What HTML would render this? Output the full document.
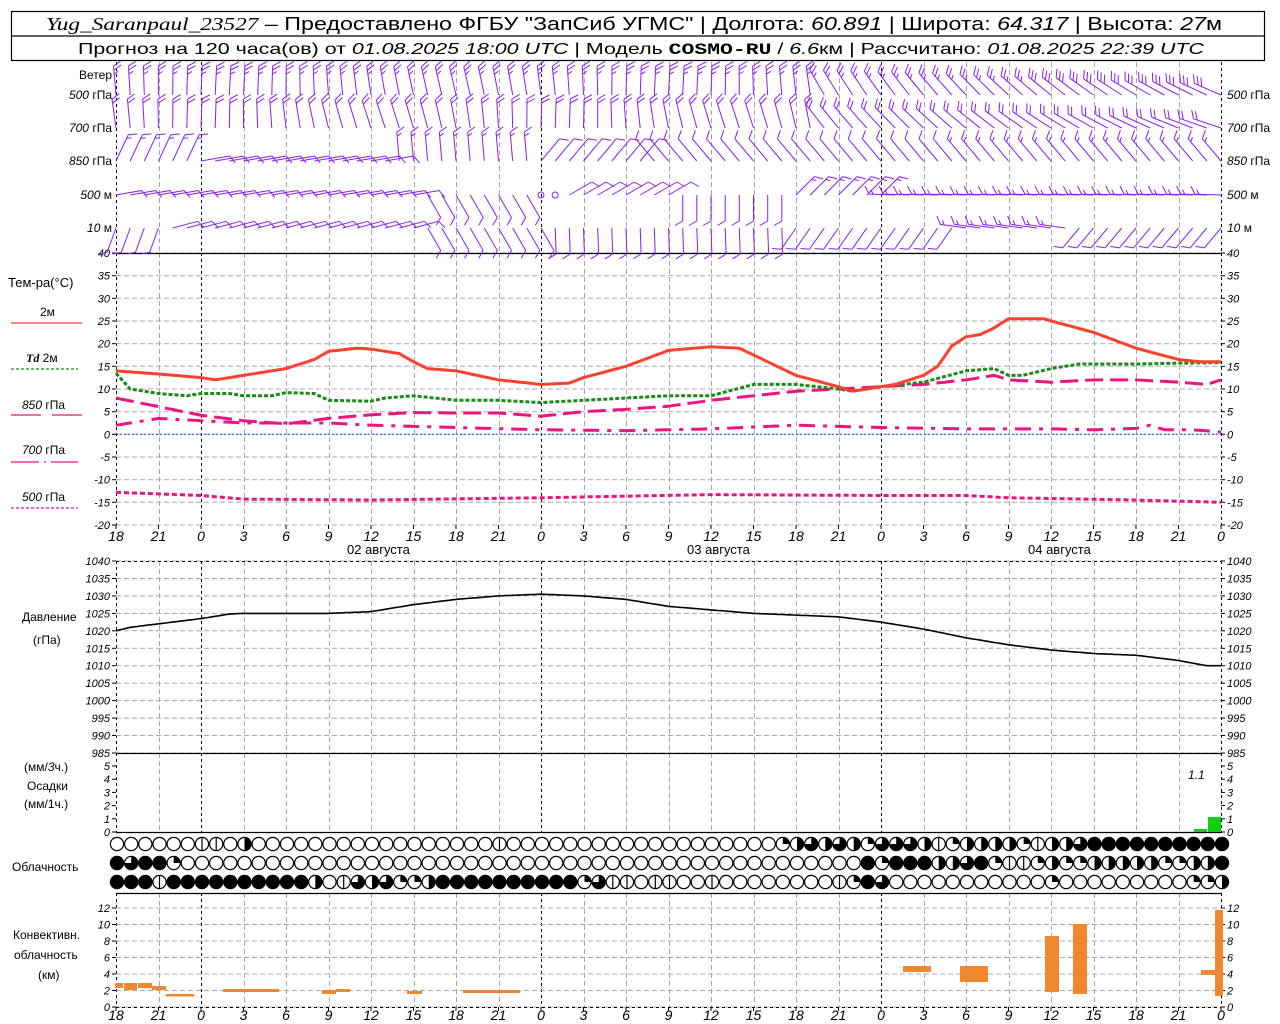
<!DOCTYPE html>
<html><head><meta charset="utf-8">
<style>
html,body{margin:0;padding:0;background:#fff;width:1280px;height:1024px;overflow:hidden}
svg{display:block}
text{font-family:"Liberation Sans",sans-serif;fill:#000}
.it{font-style:italic}
.ax{font-size:11px;font-style:italic}
.lb{font-size:12px}
</style></head><body>
<svg id="s" width="1280" height="1024" viewBox="0 0 1280 1024" xmlns="http://www.w3.org/2000/svg">
<rect x="11.5" y="11.5" width="1253" height="49" fill="#fff" stroke="#000" stroke-width="1.2"/>
<line x1="11.5" y1="36" x2="1264.5" y2="36" stroke="#000" stroke-width="1.2"/>
<text x="46" y="30" font-size="18" textLength="1176" lengthAdjust="spacingAndGlyphs"><tspan class="it" font-family="Liberation Serif">Yug_Saranpaul_23527</tspan> – Предоставлено ФГБУ "ЗапСиб УГМС" | Долгота: <tspan class="it">60.891</tspan> | Широта: <tspan class="it">64.317</tspan> | Высота: <tspan class="it">27</tspan>м</text>
<text x="78" y="54" font-size="16" textLength="1126" lengthAdjust="spacingAndGlyphs">Прогноз на 120 часа(ов) от <tspan class="it">01.08.2025 18:00 UTC</tspan>  | Модель <tspan font-weight="bold" font-family="Liberation Mono">COSMO-RU</tspan> / <tspan class="it">6.6</tspan>км | Рассчитано: <tspan class="it">01.08.2025 22:39 UTC</tspan></text>

<g class="lb" text-anchor="end">
<text x="112" y="79">Ветер</text>
<text x="112" y="99"><tspan class="it">500</tspan> гПа</text>
<text x="112" y="132"><tspan class="it">700</tspan> гПа</text>
<text x="112" y="165"><tspan class="it">850</tspan> гПа</text>
<text x="112" y="199"><tspan class="it">500</tspan> м</text>
<text x="112" y="232"><tspan class="it">10</tspan>   м</text>
</g>
<g class="lb">
<text x="1227" y="99"><tspan class="it">500</tspan> гПа</text>
<text x="1227" y="132"><tspan class="it">700</tspan> гПа</text>
<text x="1227" y="165"><tspan class="it">850</tspan> гПа</text>
<text x="1227" y="199"><tspan class="it">500</tspan> м</text>
<text x="1227" y="232"><tspan class="it">10</tspan>   м</text>
</g>
<g class="lb">
<text x="8" y="287" font-size="13">Тем-ра(°C)</text>
<text x="40" y="316">2м</text>
<text x="26" y="362"><tspan class="it" font-weight="bold" font-family="Liberation Serif">Td</tspan>  2м</text>
<text x="22" y="409"><tspan class="it">850</tspan> гПа</text>
<text x="22" y="454"><tspan class="it">700</tspan> гПа</text>
<text x="22" y="501"><tspan class="it">500</tspan> гПа</text>
<text x="22" y="621">Давление</text>
<text x="33" y="644">(гПа)</text>
<text x="24" y="771">(мм/<tspan class="it">3</tspan>ч.)</text>
<text x="27" y="790">Осадки</text>
<text x="24" y="808">(мм/1ч.)</text>
<text x="12" y="871">Облачность</text>
<text x="13" y="939">Конвективн.</text>
<text x="14" y="959">облачность</text>
<text x="38" y="979">(км)</text>
<text x="1188" y="779" class="it">1.1</text>
<text x="347" y="554" font-size="13">02  августа</text>
<text x="687" y="554" font-size="13">03  августа</text>
<text x="1028" y="554" font-size="13">04  августа</text>
</g>
<line x1="11" y1="323" x2="82" y2="323" stroke="#ff4030" stroke-width="1.2"/>
<line x1="11" y1="369" x2="78" y2="369" stroke="#1a8a1a" stroke-width="1.2" stroke-dasharray="3,2"/>
<line x1="11" y1="415" x2="41" y2="415" stroke="#ee1480" stroke-width="1.2"/>
<line x1="52" y1="415" x2="82" y2="415" stroke="#ee1480" stroke-width="1.2"/>
<line x1="11" y1="462" x2="78" y2="462" stroke="#ee1480" stroke-width="1.2" stroke-dasharray="28,5,2,5"/>
<line x1="11" y1="508" x2="78" y2="508" stroke="#ee1480" stroke-width="1.2" stroke-dasharray="3,2"/>
<g id="g"></g>
</svg>
<script>
var g=document.getElementById('g');var o='';
function X(h){return 116+h*1105/78;}
function L(x1,y1,x2,y2,st){o+='<line x1="'+x1.toFixed(1)+'" y1="'+y1.toFixed(1)+'" x2="'+x2.toFixed(1)+'" y2="'+y2.toFixed(1)+'" '+st+'/>';}
var GR='stroke="#a8a8a8" stroke-width="1" stroke-dasharray="5,3"';
var BK='stroke="#000" stroke-width="1" stroke-dasharray="3,3"';
var panels=[[62,253],[253,525],[561,753],[753,832],[893,1007]];
for(var h=0;h<=78;h+=3){var x=Math.round(X(h))+0.5;var mid=(h%24==6)||h==0||h==78;
 panels.forEach(function(p){L(x,p[0],x,p[1],mid?BK:GR);});}
function hg(y0,y1,n){for(var i=0;i<=n;i++){var y=y0+(y1-y0)*i/n;L(116,y,1221,y,GR);}}
hg(253,525,12);hg(561,753,11);hg(908,1007,6);
L(116,253.5,1222,253.5,'stroke="#000" stroke-width="1.2"');
L(116,561.5,1221,561.5,BK);
L(116,753.5,1222,753.5,'stroke="#000" stroke-width="1.2"');
L(116,832.5,1222,832.5,'stroke="#000" stroke-width="1.2"');
L(116,893.5,1222,893.5,'stroke="#000" stroke-width="1.2"');
L(116,1007.5,1221,1007.5,BK);
L(116,434.3,1221,434.3,'stroke="#2040ff" stroke-width="1" stroke-dasharray="2,2"');
function yl(vals,ys){vals.forEach(function(v,i){var y=ys[i];
 o+='<text class="ax" x="110" y="'+(y+4)+'" text-anchor="end">'+v+'</text>';
 o+='<text class="ax" x="1227" y="'+(y+4)+'">'+v+'</text>';
 L(112,y,116,y,'stroke="#000"');L(1221,y,1225,y,'stroke="#000"');});}
var tv=["40","35","30","25","20","15","10","5","0","-5","-10","-15","-20"];
yl(tv,tv.map(function(v,i){return 253+i*272/12;}));
var pv=["1040","1035","1030","1025","1020","1015","1010","1005","1000","995","990","985"];
yl(pv,pv.map(function(v,i){return 561+i*192/11;}));
var rv=["5","4","3","2","1","0"];
yl(rv,rv.map(function(v,i){return 766+i*13.2;}));
var cv=["12","10","8","6","4","2","0"];
yl(cv,cv.map(function(v,i){return 908+i*16.5;}));
var tl=["18","21","0","3","6","9","12","15","18","21","0","3","6","9","12","15","18","21","0","3","6","9","12","15","18","21","0"];
tl.forEach(function(t,i){var x=X(i*3);
 o+='<text x="'+x+'" y="541" text-anchor="middle" font-size="14" class="it">'+t+'</text>';
 o+='<text x="'+x+'" y="1020" text-anchor="middle" font-size="14" class="it">'+t+'</text>';
 L(x,525,x,529,'stroke="#000"');L(x,1007,x,1011,'stroke="#000"');});
function interp(p,h){for(var i=0;i<p.length-1;i++){if(h<=p[i+1][0]){var a=p[i],b=p[i+1];return a[1]+(b[1]-a[1])*(h-a[0])/(b[0]-a[0]);}}return p[p.length-1][1];}
function curve(p,yf,st){var s='';for(var h=0;h<=78.001;h+=0.25){s+=X(h).toFixed(1)+','+yf(interp(p,h)).toFixed(1)+' ';}
 o+='<polyline fill="none" points="'+s+'" '+st+'/>';}
function TY(t){return 434.3-t*4.533;}
var T2=[[0,14],[3,13.3],[6,12.5],[7,12],[9,13],[12,14.5],[14,16.5],[15,18.3],[17,19],[18,18.8],[20,17.8],[21,16],[22,14.5],[24,14],[27,12],[30,11],[32,11.3],[33,12.5],[36,15],[39,18.5],[42,19.3],[44,19],[45,17.5],[48,13],[51,10.5],[52,9.5],[54,10.5],[55,11],[57,13],[58,15],[59,19.5],[60,21.5],[61,22],[62,23.5],[63,25.5],[65.5,25.5],[66,25],[69,22.5],[72,19],[75,16.5],[76.5,16],[78,16]];
var TD=[[0,13.5],[1,10],[3,9],[5,8.5],[6,9],[8,9],[9,8.5],[11,8.5],[12,9.2],[14,9],[15,7.5],[18,7.3],[19,8],[21,8.5],[24,7.5],[27,7.5],[30,7],[33,7.5],[36,8],[39,8.5],[42,8.5],[45,11],[48,11],[51,10],[52,9.5],[54,10.5],[57,11.5],[60,14],[62,14.5],[63,13],[64,13],[66,14.5],[68,15.5],[72,15.5],[75,15.7],[78,15.8]];
var P85=[[0,8],[6,4.2],[9,3],[12,2.3],[15,3.5],[18,4.3],[21,4.8],[24,4.7],[27,4.7],[30,4],[33,5],[36,5.5],[39,6.2],[42,7.5],[45,8.5],[48,9.5],[51,10],[54,10.5],[57,11],[60,12],[62,13],[63,12],[66,11.5],[69,12],[72,12],[75,11.5],[77,11],[78,12]];
var P70=[[0,2],[3,3.5],[6,3],[9,2.5],[15,2.5],[18,2],[24,1.5],[30,1],[36,0.8],[42,1.2],[48,2],[54,1.5],[60,1.2],[66,1.2],[69,1],[72,1.3],[73,2],[74,1],[76,1],[78,0.5]];
var P50=[[0,-12.8],[6,-13.5],[9,-14.3],[18,-14.5],[30,-14],[42,-13.3],[54,-13.5],[60,-13.5],[63,-14],[72,-14.5],[78,-15]];
curve(P50,TY,'stroke="#ee1480" stroke-width="3" stroke-dasharray="5,3"');
curve(P70,TY,'stroke="#ee1480" stroke-width="3" stroke-dasharray="16,8,4,8"');
curve(P85,TY,'stroke="#ee1480" stroke-width="3" stroke-dasharray="18,7"');
curve(TD,TY,'stroke="#1a8a1a" stroke-width="3" stroke-dasharray="4,2"');
curve(T2,TY,'stroke="#ff4030" stroke-width="3"');
var PR=[[0,1020],[1,1021],[3,1022],[6,1023.5],[8,1024.8],[9,1025],[12,1025],[15,1025],[18,1025.5],[21,1027.5],[24,1029],[27,1030],[30,1030.5],[33,1030],[36,1029],[39,1027],[42,1026],[45,1025],[48,1024.5],[51,1024],[54,1022.5],[57,1020.5],[60,1018],[63,1016],[66,1014.5],[69,1013.5],[72,1013],[75,1011.5],[77,1010],[78,1010]];
curve(PR,function(p){return 561+(1040-p)*192/55;},'stroke="#000" stroke-width="1.6"');
o+='<rect x="1194" y="829" width="13" height="3" fill="#10d010"/><rect x="1208" y="817" width="13" height="15" fill="#10d010"/>';
var OR='#f08830';
[[115,983,8,5],[124,983,13,7],[138,983,14,5],[152,986,14,4],[166,994,28,2.5],[223,989,56,3],[322,990,14,4],[336,989,14,3],[407,991,15,3],[463,990,57,3],[903,966,28,6],[960,966,28,16],[1045,936,14,56],[1073,924,14,70],[1201,970,16,5],[1215,910,8,86]].forEach(function(b){o+='<rect x="'+b[0]+'" y="'+b[1]+'" width="'+b[2]+'" height="'+b[3]+'" fill="'+OR+'"/>';});
var rows=[
"OOOOOOVVOH"+"O".repeat(17)+"V"+"O".repeat(18)+"OQHTHTHQTTTHVQHHHHQVHHTFFFFFFFFFF",
"FTFFQ"+"O".repeat(41)+"OOOOOOO"+"FQFFFHHTFQVVQHQQHHHHHQQHHF",
"FFFVFFFFFFFFFF"+"HOVTHTQQH"+"FFFFFFFFFF"+"QTVVOVVOOV"+"OOOOOOOO"+"VQFT"+"O".repeat(11)+"Q"+"O".repeat(9)+"QQH"];
var ry=[844,863,882];var r=6.6;
rows.forEach(function(s,ri){var cy=ry[ri];for(var i=0;i<79;i++){var c=s[i]||'O';var cx=117+i*14.1667;
 o+='<circle cx="'+cx.toFixed(1)+'" cy="'+cy+'" r="'+r+'" fill="'+(c=='F'?'#000':'#fff')+'" stroke="#000" stroke-width="1.2"/>';
 var a=cx.toFixed(1),t=(cy-r).toFixed(1),bt=(cy+r).toFixed(1);
 if(c=='H')o+='<path d="M'+a+' '+t+' A'+r+' '+r+' 0 0 1 '+a+' '+bt+' Z"/>';
 if(c=='Q')o+='<path d="M'+a+' '+cy+' L'+a+' '+t+' A'+r+' '+r+' 0 0 1 '+(cx+r).toFixed(1)+' '+cy+' Z"/>';
 if(c=='T')o+='<path d="M'+a+' '+cy+' L'+a+' '+t+' A'+r+' '+r+' 0 1 1 '+(cx-r).toFixed(1)+' '+cy+' Z"/>';
 if(c=='V')L(cx,cy-r,cx,cy+r,'stroke="#000" stroke-width="1.2"');
}});
function wind(ri,i){
 var d,n;
 if(ri==0){if(i<50){d=355+8*Math.sin(i/5);n=5;}else{d=330-(i-50)*1.3;n=i<66?5:6;}}
 else if(ri==1){if(i<50){d=352+10*Math.sin(i/4);n=4;}else{d=322-(i-50)*1.2;n=4;}}
 else if(ri==2){if(i<6){d=25;n=3;}else if(i<20){d=80;n=2;}else if(i<30){d=355;n=3;}else if(i<38){d=40;n=2;}else{d=320;n=(i<60?2:3);}}
 else if(ri==3){if(i<22){d=80;n=2;}else if(i<30){d=150;n=2;}else if(i<32){d=-1;n=0;}else if(i<40){d=60;n=2;}else if(i<48){d=180;n=2;}else if(i<55){d=45;n=3;}else{d=272;n=3;}}
 else{if(i<4){d=200;n=2;}else if(i<22){d=75;n=2;}else if(i<31){d=150;n=2;}else if(i<48){d=178;n=2;}else if(i<60){d=215;n=2;}else if(i<68){d=278;n=3;}else{d=220;n=2;}}
 return [d,n];}
var wy=[95,128,161,195,228];var WS='stroke="#8a1ef0" stroke-width="1"';
for(var ri=0;ri<5;ri++){for(var i=0;i<=78;i++){var w=wind(ri,i);var bx=X(i),by=wy[ri];
 if(w[0]<0){o+='<circle cx="'+bx+'" cy="'+by+'" r="3" fill="none" '+WS+'/>';continue;}
 var dr=w[0]*Math.PI/180,sx=Math.sin(dr),sy=-Math.cos(dr),Ls=(ri<3?29:26);
 var tx=bx+sx*Ls,ty=by+sy*Ls;L(bx,by,tx,ty,WS);
 var br=(w[0]+60)*Math.PI/180,ux=Math.sin(br),uy=-Math.cos(br);
 var k=0,n=w[1];while(n>0){var len=n>=2?9:5;var px=tx-sx*k*4,py=ty-sy*k*4;L(px,py,px+ux*len,py+uy*len,WS);n-=2;k++;}
}}
g.innerHTML=o;
</script>
</body></html>
